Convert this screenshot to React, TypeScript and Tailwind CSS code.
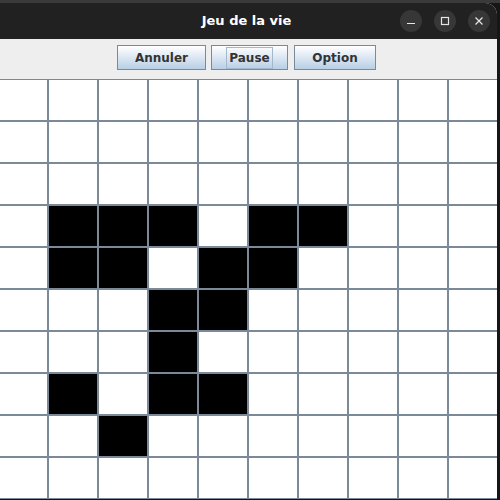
import React from 'react';

const ALIVE: Array<[number, number]> = [
  [3, 1], [3, 2], [3, 3], [3, 5], [3, 6],
  [4, 1], [4, 2], [4, 4], [4, 5],
  [5, 3], [5, 4],
  [6, 3],
  [7, 1], [7, 3], [7, 4],
  [8, 2]
];

const isAlive = (r: number, c: number) => ALIVE.some(([ar, ac]) => ar === r && ac === c);

const SwingButton = ({ label, focused }: { label: string; focused?: boolean }) => (
  <button className="flex h-[25px] w-full items-center justify-center border border-[#7a8a99] bg-gradient-to-b from-white to-[#b8cfe5] text-[12px] font-bold text-[#333333]">
    {focused ? (
      <span className="px-[2px] py-[1px] outline outline-1 outline-[#a3b8cc]">{label}</span>
    ) : (
      <span>{label}</span>
    )}
  </button>
);

export default function App() {
  const rows = Array.from({ length: 10 }, (_, r) => r);
  const cols = Array.from({ length: 10 }, (_, c) => c);

  return (
    <div
      className="h-[500px] w-[500px] overflow-hidden bg-[#161616]"
      style={{ fontFamily: '"DejaVu Sans", "Liberation Sans", sans-serif' }}
    >
      <div className="h-[3px] w-full bg-[#3a3a3a]" />
      <div className="ml-[-4px] flex w-[501px] flex-col overflow-hidden rounded-tr-[12px] bg-[#eeeeee]">
        {/* title bar */}
        <div className="relative flex h-[36px] items-center justify-center bg-[#212121]">
          <span className="text-[13px] font-bold text-white">Jeu de la vie</span>
          <div className="absolute right-[7px] top-[7px] flex gap-[12px]">
            <div className="flex h-[22px] w-[22px] items-center justify-center rounded-full bg-[#373737]">
              <svg width="10" height="10" viewBox="0 0 10 10">
                <line x1="1" y1="7.5" x2="9" y2="7.5" stroke="#e6e6e6" strokeWidth="1.2" />
              </svg>
            </div>
            <div className="flex h-[22px] w-[22px] items-center justify-center rounded-full bg-[#373737]">
              <svg width="10" height="10" viewBox="0 0 10 10">
                <rect x="1.5" y="1.5" width="7" height="7" fill="none" stroke="#e6e6e6" strokeWidth="1.2" />
              </svg>
            </div>
            <div className="flex h-[22px] w-[22px] items-center justify-center rounded-full bg-[#373737]">
              <svg width="10" height="10" viewBox="0 0 10 10">
                <path d="M1.5 1.5 L8.5 8.5 M8.5 1.5 L1.5 8.5" stroke="#e6e6e6" strokeWidth="1.2" />
              </svg>
            </div>
          </div>
        </div>

        {/* toolbar */}
        <div className="flex h-[40px] items-start justify-center gap-[5px] bg-[#eeeeee] pt-[6px]">
          <div className="w-[89px]">
            <SwingButton label="Annuler" />
          </div>
          <div className="w-[77px]">
            <SwingButton label="Pause" focused />
          </div>
          <div className="ml-[1px] w-[82px]">
            <SwingButton label="Option" />
          </div>
        </div>

        {/* grid */}
        <div className="pl-[2px]">
          <div className="grid w-[500px] grid-cols-10">
            {rows.map((r) =>
              cols.map((c) => (
                <div
                  key={`${r}-${c}`}
                  className={`h-[42px] border border-[#7a8a99] ${isAlive(r, c) ? 'bg-black' : 'bg-white'}`}
                />
              ))
            )}
          </div>
        </div>
      </div>
    </div>
  );
}
